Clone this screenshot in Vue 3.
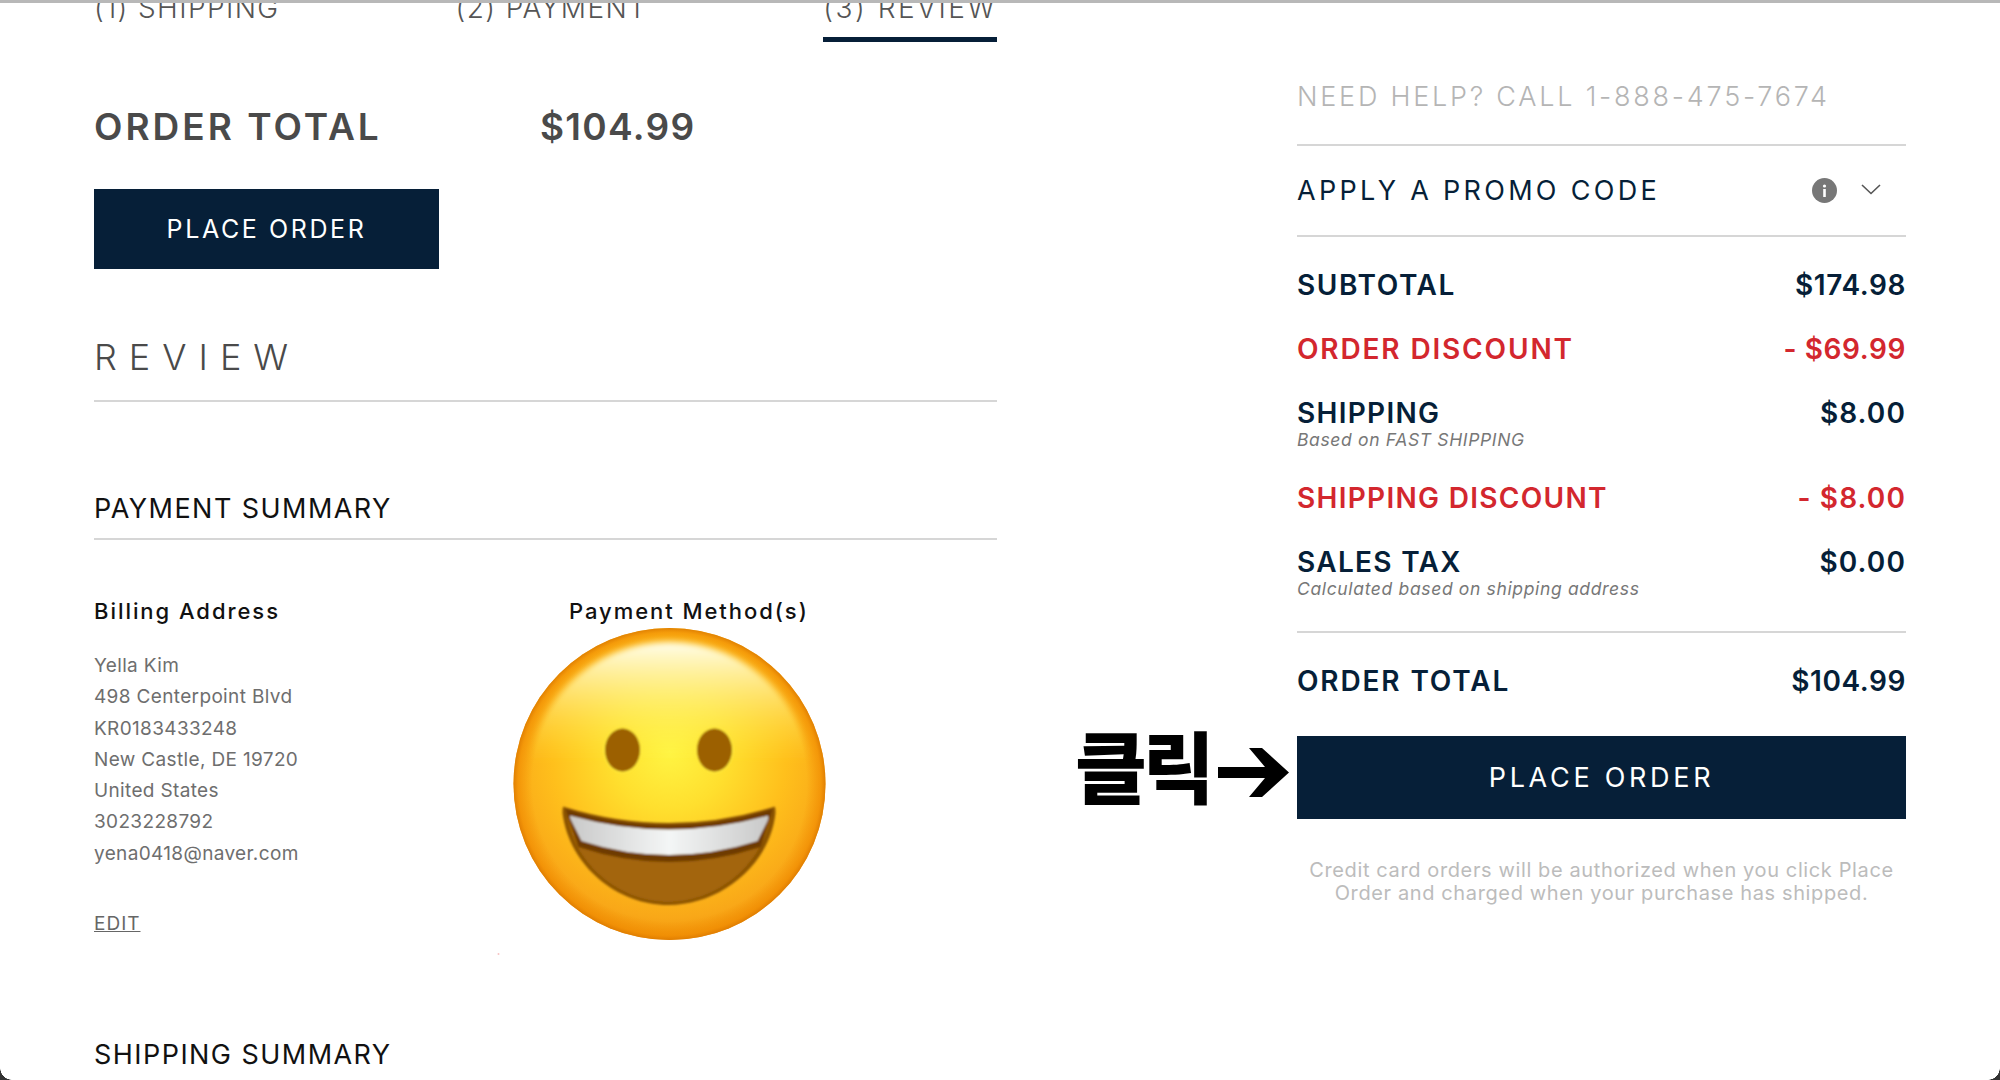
<script setup>
const billing = ['Yella Kim', '498 Centerpoint Blvd', 'KR0183433248', 'New Castle, DE 19720', 'United States', '3023228792', 'yena0418@naver.com']
</script>

<template>
  <div class="page">
    <div class="topbar"></div>
    <main class="left">
      <nav class="tabs">
        <span class="tab">(1) SHIPPING</span>
        <span class="tab">(2) PAYMENT</span>
        <span class="tab active">(3) REVIEW</span>
      </nav>
      <div class="total">
        <span class="total-label">ORDER TOTAL</span>
        <span class="total-value">$104.99</span>
      </div>
      <button class="btn btn-small">PLACE ORDER</button>
      <h1 class="review">REVIEW</h1>
      <h2 class="summary pay">PAYMENT SUMMARY</h2>
      <div class="details">
        <section class="billing">
          <h3>Billing Address</h3>
          <ul>
            <li v-for="line in billing" :key="line">{{ line }}</li>
          </ul>
          <a class="edit">EDIT</a>
        </section>
        <section class="method">
          <h3>Payment Method(s)</h3>
          <svg class="emoji" width="313" height="314" viewBox="0 0 312 314">
            <defs>
              <radialGradient id="face" cx="156" cy="125" r="195" gradientUnits="userSpaceOnUse">
                <stop offset="0" stop-color="#fff443" />
                <stop offset="0.3" stop-color="#ffdf2e" />
                <stop offset="0.6" stop-color="#ffc01c" />
                <stop offset="0.85" stop-color="#f9a818" />
                <stop offset="1" stop-color="#ee9008" />
              </radialGradient>
              <radialGradient id="rim" cx="156" cy="157" r="156" gradientUnits="userSpaceOnUse">
                <stop offset="0.88" stop-color="#f28c00" stop-opacity="0" />
                <stop offset="0.97" stop-color="#f08a00" stop-opacity="0.65" />
                <stop offset="1" stop-color="#dd7a00" stop-opacity="0.9" />
              </radialGradient>
              <linearGradient id="shine" gradientUnits="userSpaceOnUse" x1="0" y1="14" x2="0" y2="135">
                <stop offset="0" stop-color="#fffef0" />
                <stop offset="0.4" stop-color="#fffbb0" stop-opacity="0.6" />
                <stop offset="1" stop-color="#fff443" stop-opacity="0" />
              </linearGradient>
              <linearGradient id="teeth" x1="0" y1="0" x2="1" y2="0">
                <stop offset="0" stop-color="#c9c9c9" />
                <stop offset="0.5" stop-color="#f4f6f6" />
                <stop offset="1" stop-color="#c9c9c9" />
              </linearGradient>
              <filter id="soft" x="-10%" y="-10%" width="120%" height="120%">
                <feGaussianBlur stdDeviation="3" />
              </filter>
              <filter id="edge" x="-5%" y="-5%" width="110%" height="110%">
                <feGaussianBlur stdDeviation="0.8" />
              </filter>
            </defs>
            <circle cx="156" cy="157" r="156" fill="url(#face)" />
            <circle cx="156" cy="157" r="156" fill="url(#rim)" />
            <circle cx="156" cy="157" r="142" fill="url(#shine)" filter="url(#soft)" />
            <g filter="url(#edge)">
              <ellipse cx="109" cy="123" rx="19" ry="23" fill="#ffe93a" />
              <ellipse cx="201" cy="123" rx="19" ry="23" fill="#ffe93a" />
              <ellipse cx="109" cy="123" rx="17.5" ry="21.5" fill="#9c6100" />
              <ellipse cx="201" cy="123" rx="17.5" ry="21.5" fill="#9c6100" />
              <path d="M51 180 Q155 212 260 180 Q262 178 262 186 C256 240 205 278 155 278 C105 278 56 240 49 186 Q49 178 51 180Z" fill="#8a5200" />
              <path d="M54 190 Q155 218 257 190 C248 240 202 275 155 275 C108 275 62 240 54 190Z" fill="#a36508" />
              <path d="M52 182 Q155 214 259 182 L247 220 Q155 250 65 220Z" fill="#6e3a00" />
              <path d="M58 189 Q155 216 253 189 Q256 188 254 194 L244 214 Q155 242 68 214 L58 194 Q55 188 58 189Z" fill="url(#teeth)" />
            </g>
            <circle cx="-15" cy="327" r="1" fill="#f7c4c4" />
          </svg>
        </section>
      </div>
      <h2 class="summary ship">SHIPPING SUMMARY</h2>
    </main>

    <aside class="right">
      <p class="help">NEED HELP? CALL 1-888-475-7674</p>
      <div class="promo">
        <span class="promo-label">APPLY A PROMO CODE</span>
        <span class="promo-icons">
          <svg width="25" height="25" viewBox="0 0 25 25">
            <circle cx="12.5" cy="12.5" r="12.5" fill="#777" />
            <circle cx="12.5" cy="8" r="1.6" fill="#fff" />
            <rect x="11.2" y="11" width="2.6" height="8" fill="#fff" />
          </svg>
          <svg class="chev" width="20" height="11" viewBox="0 0 20 11">
            <path d="M1 1 L10 9.5 L19 1" fill="none" stroke="#555" stroke-width="1.6" />
          </svg>
        </span>
      </div>
      <div class="line first"><span>SUBTOTAL</span><span class="val">$174.98</span></div>
      <div class="line red"><span class="loose">ORDER DISCOUNT</span><span class="val">- $69.99</span></div>
      <div class="line"><span class="tight">SHIPPING</span><span class="val wide">$8.00</span></div>
      <p class="note">Based on FAST SHIPPING</p>
      <div class="line red after-note"><span class="tight">SHIPPING DISCOUNT</span><span class="val wide">- $8.00</span></div>
      <div class="line"><span class="tight">SALES TAX</span><span class="val wide">$0.00</span></div>
      <p class="note last-note">Calculated based on shipping address</p>
      <div class="line grand"><span class="loose">ORDER TOTAL</span><span class="val">$104.99</span></div>
      <div class="cta">
        <div class="callout">
          <span class="callout-text">클릭</span>
          <svg width="71" height="49" viewBox="0 0 71 49">
            <path d="M0 19 H47 L31 0 H44 L71 24.500 L44 49 H31 L47 30 H0Z" fill="#000" />
          </svg>
        </div>
        <button class="btn btn-large">PLACE ORDER</button>
      </div>
      <p class="fine">Credit card orders will be authorized when you click Place<br />Order and charged when your purchase has shipped.</p>
    </aside>
    <i class="corner bl"></i>
    <i class="corner br"></i>
  </div>
</template>

<style>
html, body { margin: 0; background: #fff; }
</style>

<style scoped>
.page {
  position: relative;
  display: flex;
  width: 2000px;
  height: 1080px;
  overflow: hidden;
  background: #fff;
  font-family: Inter, "Noto Sans", "Noto Sans CJK KR", sans-serif;
  color: #4a4a4a;
}
.topbar { position: absolute; left: 0; top: 0; width: 100%; height: 3px; background: #b8b8b8; z-index: 2; }
.corner { position: absolute; bottom: 0; width: 12px; height: 12px; background: #333; }
.corner.bl { left: 0; -webkit-mask: radial-gradient(circle at 100% 0, transparent 11.5px, #000 12px); mask: radial-gradient(circle at 100% 0, transparent 11.5px, #000 12px); }
.corner.br { right: 0; -webkit-mask: radial-gradient(circle at 0 0, transparent 11.5px, #000 12px); mask: radial-gradient(circle at 0 0, transparent 11.5px, #000 12px); }

.left { width: 903px; margin-left: 94px; margin-top: -6px; flex: none; }
.tabs { display: flex; justify-content: space-between; }
.tab { font-size: 28px; line-height: 28px; padding-bottom: 15px; border-bottom: 5px solid transparent; font-weight: 300; color: #555; letter-spacing: 1.4px; height: 28px; }
.tab.active { border-bottom-color: #061f38; letter-spacing: 2.5px; }

.total { display: flex; margin-top: 65px; height: 40px; line-height: 40px; font-size: 37px; font-weight: 600; }
.total-label { width: 446px; letter-spacing: 3px; }
.total-value { letter-spacing: 1.3px; }
.btn { display: block; border: 0; padding: 0; background: #061f38; color: #fff; font-family: inherit; font-weight: 400; }
.btn-small { margin-top: 42px; width: 345px; height: 80px; font-size: 25px; letter-spacing: 2.6px; }
.review { margin: 68px 0 0; height: 40px; padding-bottom: 23px; border-bottom: 2px solid #d6d6d6; font-size: 36px; line-height: 40px; font-weight: 300; letter-spacing: 12px; }
.summary { margin: 0; font-size: 27px; line-height: 30px; font-weight: 400; color: #111; letter-spacing: 1.45px; }
.pay { margin-top: 92px; padding-bottom: 14px; border-bottom: 2px solid #d6d6d6; }
.ship { margin-top: 99px; }
.details { display: flex; margin-top: 59px; }
.billing { width: 419px; flex: none; }
h3 { margin: 0; font-size: 22px; line-height: 24px; font-weight: 500; color: #111; letter-spacing: 1.95px; }
ul { list-style: none; margin: 27px 0 0; padding: 0; font-size: 19px; line-height: 31.3px; color: #6e6e6e; letter-spacing: 0.35px; }
.edit { display: block; margin-top: 43px; font-size: 19px; line-height: 24px; color: #666; text-decoration: underline; letter-spacing: 1px; }
.method { width: 313px; }
.method h3 { padding-left: 56px; white-space: nowrap; }
.emoji { display: block; margin-top: 4px; overflow: visible; }

.right { width: 609px; margin-left: 300px; padding-top: 80px; flex: none; }
.help { margin: 0; padding-bottom: 30px; border-bottom: 2px solid #d6d6d6; font-size: 27px; line-height: 34px; font-weight: 300; color: #b5b5b5; letter-spacing: 2.76px; }
.promo { display: flex; justify-content: space-between; align-items: center; height: 89px; border-bottom: 2px solid #d6d6d6; }
.promo-label { font-size: 27px; font-weight: 400; color: #061f38; letter-spacing: 3.3px; }
.promo-icons { display: flex; align-items: center; padding-right: 25px; gap: 24px; }
.chev { margin-top: -3px; }
.line { display: flex; justify-content: space-between; margin-top: 34px; font-size: 28px; line-height: 30px; font-weight: 600; color: #061f38; letter-spacing: 1.6px; }
.tight { letter-spacing: 1.3px; }
.loose { letter-spacing: 1.85px; }
.val { letter-spacing: 0.6px; }
.val.wide { letter-spacing: 1.1px; }
.line.first { margin-top: 32.5px; }
.line.red { color: #d3272e; }
.line.after-note { margin-top: 32px; }
.note { margin: 1px 0 0; font-size: 17.5px; line-height: 22px; font-style: italic; font-weight: 400; color: #777; letter-spacing: 0.65px; }
.last-note { padding-bottom: 31px; border-bottom: 2px solid #d6d6d6; }
.line.grand { margin-top: 33px; }
.cta { position: relative; margin-top: 40px; }
.btn-large { width: 100%; height: 83px; font-size: 27px; letter-spacing: 3.7px; }
.callout { position: absolute; left: -222px; top: -9px; width: 214px; height: 75px; display: flex; align-items: center; justify-content: space-between; }
.callout-text { font-family: "Noto Sans CJK KR", sans-serif; font-weight: 900; font-size: 78px; line-height: 75px; color: #000; letter-spacing: -4px; }
.callout svg { margin-top: 16px; }
.fine { margin: 40px 0 0; font-size: 20px; line-height: 23px; text-align: center; color: #bcbcbc; font-weight: 400; letter-spacing: 0.62px; }
</style>
